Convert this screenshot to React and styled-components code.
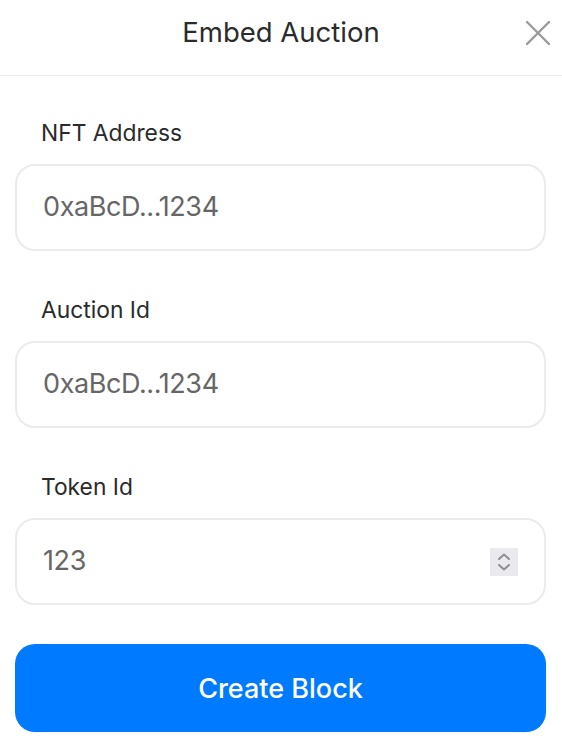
import React from "react";
import styled, { createGlobalStyle } from "styled-components";

const GlobalStyle = createGlobalStyle`
  body {
    margin: 0;
    background: #ffffff;
    font-family: Inter, "Noto Sans", sans-serif;
  }
`;

const Panel = styled.div`
  width: 562px;
  min-height: 745px;
  background: #ffffff;
`;

const Header = styled.div`
  height: 75px;
  display: flex;
  align-items: center;
  justify-content: center;
  position: relative;
  border-bottom: 1px solid #ececec;
`;

const Title = styled.h1`
  margin: 0 0 12px;
  font-size: 27.5px;
  font-weight: 400;
  color: #2b2b2b;
`;

const CloseButton = styled.button`
  position: absolute;
  top: 20px;
  right: 11px;
  width: 26px;
  height: 26px;
  padding: 0;
  border: none;
  background: none;
  display: flex;
  align-items: center;
  justify-content: center;
  cursor: pointer;
`;

const Form = styled.form`
  display: flex;
  flex-direction: column;
  padding: 44px 16px 0 15px;
`;

const Field = styled.div`
  display: flex;
  flex-direction: column;
  margin-bottom: 46px;
`;

const Label = styled.label`
  font-size: 22.8px;
  line-height: 26px;
  color: #2a2a2a;
  padding-left: 26px;
  margin-bottom: 18px;
`;

const InputBox = styled.div`
  height: 83px;
  border: 2px solid #ebebeb;
  border-radius: 20px;
  display: flex;
  align-items: center;
  padding: 0 26px 0 26px;
`;

const Input = styled.input`
  flex: 1;
  min-width: 0;
  border: none;
  outline: none;
  background: transparent;
  font-family: Inter, "Noto Sans", sans-serif;
  font-size: 27px;
  letter-spacing: -0.4px;
  color: #666666;
  padding: 0 0 2px;

  &::placeholder {
    color: #666666;
  }
`;

const Spinner = styled.div`
  width: 28px;
  height: 28px;
  background: #e9e9ee;
  display: flex;
  align-items: center;
  justify-content: center;
`;

const SubmitButton = styled.button`
  height: 88px;
  margin-top: -7px;
  border: none;
  border-radius: 20px;
  background: #007aff;
  color: #ffffff;
  font-family: Inter, "Noto Sans", sans-serif;
  font-size: 27px;
  font-weight: 500;
  cursor: pointer;
`;

const fields = [
  { label: "NFT Address", placeholder: "0xaBcD...1234" },
  { label: "Auction Id", placeholder: "0xaBcD...1234" },
  { label: "Token Id", placeholder: "123", spinner: true },
];

const App = () => (
  <Panel>
    <GlobalStyle />
    <Header>
      <Title>Embed Auction</Title>
      <CloseButton aria-label="Close">
        <svg width="24" height="24" viewBox="0 0 24 24">
          <path d="M1 1 L23 23 M23 1 L1 23" stroke="#9a9a9a" strokeWidth="2.4" strokeLinecap="round" />
        </svg>
      </CloseButton>
    </Header>
    <Form onSubmit={e => e.preventDefault()}>
      {fields.map(f => (
        <Field key={f.label}>
          <Label>{f.label}</Label>
          <InputBox>
            <Input placeholder={f.placeholder} />
            {f.spinner && (
              <Spinner>
                <svg width="16" height="22" viewBox="0 0 16 22">
                  <path d="M3 8 L8 3.5 L13 8 M3 14 L8 18.5 L13 14" fill="none" stroke="#8e8e93" strokeWidth="2" strokeLinecap="round" strokeLinejoin="round" />
                </svg>
              </Spinner>
            )}
          </InputBox>
        </Field>
      ))}
      <SubmitButton type="submit">Create Block</SubmitButton>
    </Form>
  </Panel>
);

export default App;
